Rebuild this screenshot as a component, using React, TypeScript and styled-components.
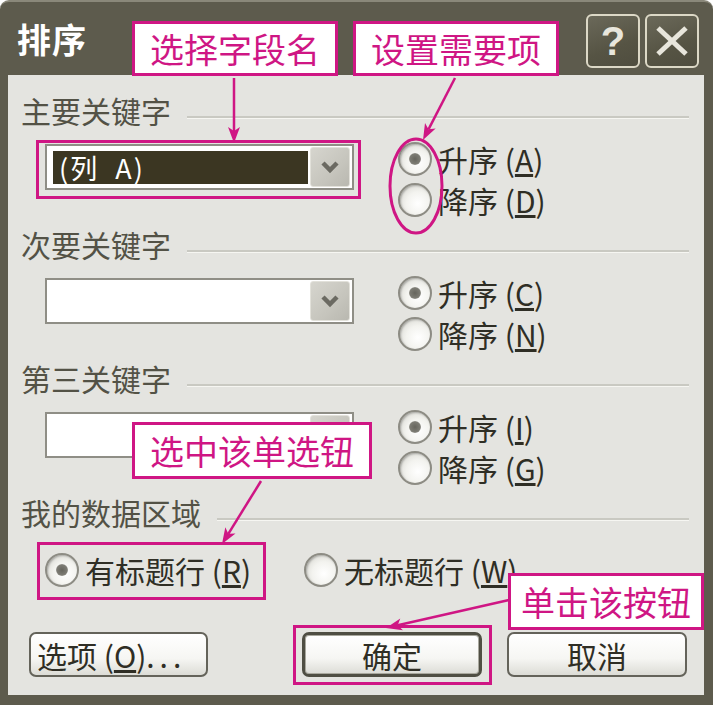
import React from 'react';
import styled, { createGlobalStyle } from 'styled-components';

const MAGENTA = '#cf1684';
const FRAME = '#5d5b4d';

const Global = createGlobalStyle`
  html, body { margin: 0; padding: 0; background: #ffffff; }
  body { font-family: "Noto Sans CJK SC", "Liberation Sans", sans-serif; }
  * { box-sizing: border-box; }
`;

const Window = styled.div`
  position: relative;
  width: 713px;
  height: 705px;
  background: ${FRAME};
  border-top: 2px solid #8a887a;
  border-radius: 9px 9px 0 0;
  display: flex;
  flex-direction: column;
  overflow: hidden;
`;

const TitleBar = styled.div`
  height: 73px;
  display: flex;
  align-items: flex-start;
  padding: 12px 14px 0 17px;
`;

const Title = styled.h1`
  margin: 8px 0 0 0;
  font-size: 34px;
  line-height: 34px;
  font-weight: 700;
  color: #ffffff;
  letter-spacing: 1px;
`;

const CaptionButtons = styled.div`
  margin-left: auto;
  display: flex;
  gap: 5px;
`;

const CaptionButton = styled.div`
  width: 54px;
  height: 54px;
  border: 2px solid #dcd8c6;
  border-radius: 6px;
  background: linear-gradient(160deg, #6b695a 0%, #565444 60%, #4f4d3f 100%);
  display: flex;
  align-items: center;
  justify-content: center;
  color: #e8e6dc;
  font-family: "Liberation Sans", sans-serif;
  font-weight: 700;
  font-size: 40px;
  line-height: 1;
`;

const Body = styled.div`
  flex: 1;
  margin: 0 9px 10px 8px;
  background: #e4e4e0;
  padding: 17px 15px 0 13px;
  display: flex;
  flex-direction: column;
`;

const Section = styled.section`
  display: flex;
  flex-direction: column;
  & + & {
    margin-top: 6px;
  }
`;

const GroupHeader = styled.div`
  display: flex;
  align-items: flex-start;
  height: 36px;
`;

const GroupLabel = styled.span`
  font-size: 30px;
  line-height: 36px;
  color: #535246;
  white-space: nowrap;
`;

const GroupLine = styled.div`
  flex: 1;
  height: 3px;
  margin: 24px 0 0 16px;
  border-top: 2px solid #c9c9c2;
  border-bottom: 1px solid #f6f6f2;
`;

const KeyRow = styled.div`
  display: flex;
  align-items: flex-start;
  margin-top: 10px;
  padding-left: 24px;
`;

const Combo = styled.div`
  width: 309px;
  height: 46px;
  margin-top: 6px;
  border: 2px solid #8f8e86;
  background: #ffffff;
  display: flex;
  align-items: center;
  gap: 2px;
  padding: 0 2px 0 6px;
`;

const ComboValue = styled.div<{ $selected?: boolean }>`
  flex: 1;
  height: 33px;
  background: ${p => (p.$selected ? '#3b3622' : 'transparent')};
  color: #ffffff;
  font-size: 27px;
  line-height: 33px;
  padding-left: 6px;
  letter-spacing: 2px;
  white-space: pre;
`;

const DropButton = styled.div`
  width: 40px;
  height: 40px;
  border-radius: 3px;
  background: linear-gradient(135deg, #d6d5ce 0%, #c6c5bd 60%, #b9b8b0 100%);
  border: 1px solid #e2e1da;
  display: flex;
  align-items: center;
  justify-content: center;
`;

const RadioColumn = styled.div`
  display: flex;
  flex-direction: column;
  margin-left: 44px;
`;

const RadioItem = styled.label<{ $gapLeft?: number }>`
  display: flex;
  align-items: center;
  height: 41px;
  gap: 6px;
  margin-left: ${p => p.$gapLeft ?? 0}px;
`;

const RadioDot = styled.span<{ $checked?: boolean }>`
  width: 34px;
  height: 34px;
  border-radius: 50%;
  border: 2px solid #8d8c84;
  background: radial-gradient(circle at 60% 62%, #ffffff 0%, #f3f3ef 45%, #d0d0c9 100%);
  box-shadow: inset 1px 1px 2px rgba(0, 0, 0, 0.25);
  display: flex;
  align-items: center;
  justify-content: center;
  flex-shrink: 0;
  &::after {
    content: '';
    width: 12px;
    height: 12px;
    border-radius: 50%;
    background: radial-gradient(circle, #66655d 0%, #7d7c74 60%, rgba(140, 139, 131, 0) 100%);
    display: ${p => (p.$checked ? 'block' : 'none')};
  }
`;

const RadioText = styled.span`
  font-size: 30px;
  line-height: 36px;
  color: #2f2e25;
  white-space: nowrap;
`;

const Mnemonic = styled.span`
  text-decoration: underline;
  text-underline-offset: 2px;
`;

const Dots = styled.span`
  letter-spacing: 5px;
`;

const DataRow = styled.div`
  display: flex;
  margin-top: 19px;
  padding-left: 24px;
`;

const ButtonRow = styled.div`
  display: flex;
  margin-top: 42px;
  padding: 0 2px 0 8px;
`;

const DialogButton = styled.button<{ $default?: boolean; $push?: boolean; $gap?: number }>`
  width: 180px;
  height: 45px;
  margin-left: ${p => (p.$push ? 'auto' : `${p.$gap ?? 0}px`)};
  border: ${p => (p.$default ? '3px solid #4f4e43' : '2px solid #64635a')};
  border-radius: 7px;
  background: linear-gradient(180deg, #ffffff 0%, #f6f6f3 60%, #dcdcd6 100%);
  box-shadow: ${p => (p.$default ? 'inset 0 0 0 1px #a9a89e' : 'none')};
  font-family: "Noto Sans CJK SC", sans-serif;
  font-size: 30px;
  line-height: 1;
  color: #2f2e25;
  padding: 0;
  display: flex;
  align-items: center;
  justify-content: center;
`;

const OptionsButton = styled(DialogButton)`
  justify-content: flex-start;
  padding-left: 6px;
  width: 179px;
`;

/* Annotation overlay */
const Callout = styled.div<{ $x: number; $y: number; $w: number; $h: number }>`
  position: absolute;
  left: ${p => p.$x}px;
  top: ${p => p.$y}px;
  width: ${p => p.$w}px;
  height: ${p => p.$h}px;
  background: #ffffff;
  border: 3px solid ${MAGENTA};
  color: ${MAGENTA};
  font-size: 34px;
  line-height: 1;
  display: flex;
  align-items: center;
  justify-content: center;
  white-space: nowrap;
`;

const Highlight = styled.div<{ $x: number; $y: number; $w: number; $h: number }>`
  position: absolute;
  left: ${p => p.$x}px;
  top: ${p => p.$y}px;
  width: ${p => p.$w}px;
  height: ${p => p.$h}px;
  border: 3px solid ${MAGENTA};
  pointer-events: none;
`;

const ArrowLayer = styled.svg`
  position: absolute;
  left: 0;
  top: 0;
  pointer-events: none;
`;

function Arrow({ x1, y1, x2, y2 }: { x1: number; y1: number; x2: number; y2: number }) {
  const dx = x2 - x1;
  const dy = y2 - y1;
  const len = Math.hypot(dx, dy);
  const ux = dx / len;
  const uy = dy / len;
  const hl = 16;
  const hw = 6;
  const bx = x2 - ux * hl;
  const by = y2 - uy * hl;
  const px = -uy;
  const py = ux;
  const pts = `${x2},${y2} ${bx + px * hw},${by + py * hw} ${bx + ux * 4},${by + uy * 4} ${bx - px * hw},${by - py * hw}`;
  return (
    <g>
      <line x1={x1} y1={y1} x2={bx + ux * 4} y2={by + uy * 4} stroke={MAGENTA} strokeWidth={2.5} />
      <polygon points={pts} fill={MAGENTA} />
    </g>
  );
}

function Chevron() {
  return (
    <svg width="20" height="14" viewBox="0 0 20 14">
      <polyline points="3,3 10,10 17,3" fill="none" stroke="#6b6a62" strokeWidth="4.5" strokeLinejoin="miter" />
    </svg>
  );
}

function CloseGlyph() {
  return (
    <svg width="34" height="32" viewBox="0 0 34 32">
      <line x1="3" y1="3" x2="31" y2="29" stroke="#e8e6dc" strokeWidth="5" />
      <line x1="31" y1="3" x2="3" y2="29" stroke="#e8e6dc" strokeWidth="5" />
    </svg>
  );
}

type SortKeyProps = {
  label: string;
  value?: string;
  asc: [string, string];
  desc: [string, string];
};

function SortKey({ label, value, asc, desc }: SortKeyProps) {
  return (
    <Section>
      <GroupHeader>
        <GroupLabel>{label}</GroupLabel>
        <GroupLine />
      </GroupHeader>
      <KeyRow>
        <Combo>
          <ComboValue $selected={!!value}>{value}</ComboValue>
          <DropButton>
            <Chevron />
          </DropButton>
        </Combo>
        <RadioColumn>
          <RadioItem>
            <RadioDot $checked />
            <RadioText>
              {asc[0]} (<Mnemonic>{asc[1]}</Mnemonic>)
            </RadioText>
          </RadioItem>
          <RadioItem>
            <RadioDot />
            <RadioText>
              {desc[0]} (<Mnemonic>{desc[1]}</Mnemonic>)
            </RadioText>
          </RadioItem>
        </RadioColumn>
      </KeyRow>
    </Section>
  );
}

export default function App() {
  return (
    <>
      <Global />
      <Window>
        <TitleBar>
          <Title>排序</Title>
          <CaptionButtons>
            <CaptionButton>?</CaptionButton>
            <CaptionButton>
              <CloseGlyph />
            </CaptionButton>
          </CaptionButtons>
        </TitleBar>
        <Body>
          <SortKey label="主要关键字" value="(列  A)" asc={['升序', 'A']} desc={['降序', 'D']} />
          <SortKey label="次要关键字" asc={['升序', 'C']} desc={['降序', 'N']} />
          <SortKey label="第三关键字" asc={['升序', 'I']} desc={['降序', 'G']} />
          <Section>
            <GroupHeader>
              <GroupLabel>我的数据区域</GroupLabel>
              <GroupLine />
            </GroupHeader>
            <DataRow>
              <RadioItem>
                <RadioDot $checked />
                <RadioText>
                  有标题行 (<Mnemonic>R</Mnemonic>)
                </RadioText>
              </RadioItem>
              <RadioItem $gapLeft={53}>
                <RadioDot />
                <RadioText>
                  无标题行 (<Mnemonic>W</Mnemonic>)
                </RadioText>
              </RadioItem>
            </DataRow>
          </Section>
          <ButtonRow>
            <OptionsButton>
              选项 (<Mnemonic>O</Mnemonic>)<Dots>...</Dots>
            </OptionsButton>
            <DialogButton $default $push>
              确定
            </DialogButton>
            <DialogButton $gap={25}>取消</DialogButton>
          </ButtonRow>
        </Body>

        <Highlight $x={36} $y={138} $w={325} $h={59} />
        <Highlight $x={37} $y={540} $w={229} $h={58} />
        <Highlight $x={293} $y={623} $w={199} $h={60} />

        <Callout $x={132} $y={19} $w={206} $h={55}>选择字段名</Callout>
        <Callout $x={353} $y={19} $w={206} $h={55}>设置需要项</Callout>
        <Callout $x={132} $y={420} $w={240} $h={57}>选中该单选钮</Callout>
        <Callout $x={508} $y={571} $w={196} $h={57}>单击该按钮</Callout>

        <ArrowLayer width={713} height={705} viewBox="0 -2 713 705">
          <ellipse cx={416} cy={182} rx={26} ry={47} fill="none" stroke={MAGENTA} strokeWidth={3} />
          <Arrow x1={234} y1={74} x2={234} y2={139} />
          <Arrow x1={455} y1={74} x2={423} y2={136} />
          <Arrow x1={261} y1={477} x2={222} y2={540} />
          <Arrow x1={509} y1={596} x2={386} y2={624} />
        </ArrowLayer>
      </Window>
    </>
  );
}
